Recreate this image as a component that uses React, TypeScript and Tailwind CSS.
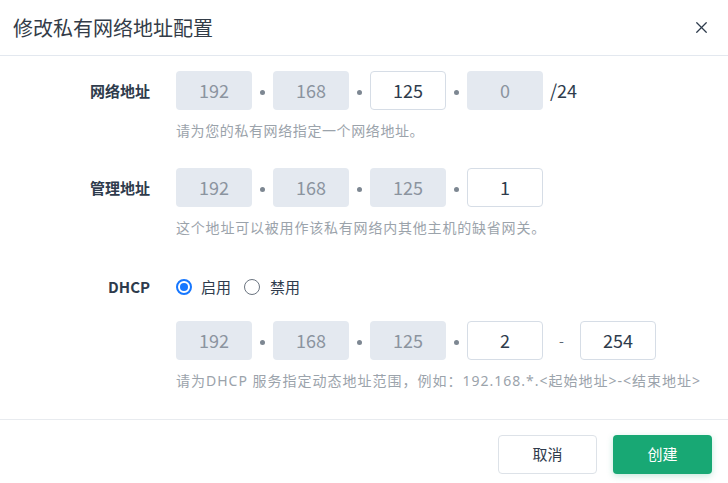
import { X } from "lucide-react";

const font = { fontFamily: '"Noto Sans CJK SC", "Noto Sans", sans-serif' };

function Octet({ value, disabled }: { value: string; disabled?: boolean }) {
  return disabled ? (
    <div className="flex h-[39px] w-[76px] items-center justify-center rounded bg-[#e4e9f0] text-[18px] text-[#8b949f]">
      {value}
    </div>
  ) : (
    <div className="flex h-[39px] w-[76px] items-center justify-center rounded border border-[#d6dde6] bg-white text-[18px] text-[#2e3b4c]">
      {value}
    </div>
  );
}

function Dot() {
  return (
    <div className="flex w-[21px] items-center justify-center pt-[3px]">
      <span className="h-[5px] w-[5px] rounded-full bg-[#7d8792]" />
    </div>
  );
}

function Address({ parts }: { parts: { v: string; d?: boolean }[] }) {
  return (
    <div className="flex items-stretch">
      {parts.map((p, i) => (
        <div key={i} className="flex items-stretch">
          {i > 0 && <Dot />}
          <Octet value={p.v} disabled={p.d} />
        </div>
      ))}
    </div>
  );
}

function Row({ label, children }: { label: string; children: React.ReactNode }) {
  return (
    <div className="flex items-center">
      <div className="w-[150px] text-right text-[15px] font-bold leading-5 text-[#2e3b4c]">{label}</div>
      <div className="ml-[26px] flex items-center">{children}</div>
    </div>
  );
}

function Hint({ children, className = "" }: { children: React.ReactNode; className?: string }) {
  return (
    <p
      className={`ml-[176px] text-[14px] leading-5 text-[#9ba3ab] ${className}`}
      style={{ fontFamily: '"Noto Sans", "Noto Sans CJK SC", sans-serif' }}
    >
      {children}
    </p>
  );
}

export default function App() {
  return (
    <div className="flex h-[483px] w-[728px] flex-col bg-white" style={font}>
      <div className="flex h-14 items-center justify-between border-b border-[#e3e8ef] pl-[13px] pr-[17px]">
        <h1 className="text-[20px] text-[#333c48]">修改私有网络地址配置</h1>
        <X size={19} strokeWidth={1.6} className="text-[#2e3b4c]" />
      </div>

      <div className="pt-[15px]">
        <Row label="网络地址">
          <Address parts={[{ v: "192", d: true }, { v: "168", d: true }, { v: "125" }, { v: "0", d: true }]} />
          <span className="ml-[7px] text-[18px] text-[#2e3b4c]">/24</span>
        </Row>
        <Hint className="mt-[11px] tracking-[0.6px]">请为您的私有网络指定一个网络地址。</Hint>

        <div className="mt-[27px]">
          <Row label="管理地址">
            <Address parts={[{ v: "192", d: true }, { v: "168", d: true }, { v: "125", d: true }, { v: "1" }]} />
          </Row>
        </div>
        <Hint className="mt-[11px] tracking-[0.8px]">这个地址可以被用作该私有网络内其他主机的缺省网关。</Hint>

        <div className="mt-[39px]">
          <Row label="DHCP">
            <div className="flex h-5 items-center text-[15px] leading-5 text-[#2e3b4c]">
              <span className="flex h-[16px] w-[16px] items-center justify-center rounded-full border-2 border-[#1677ff]">
                <span className="h-[8px] w-[8px] rounded-full bg-[#1677ff]" />
              </span>
              <span className="ml-[9px]">启用</span>
              <span className="ml-[13px] h-[16px] w-[16px] rounded-full border border-[#6b7480]" />
              <span className="ml-[10px]">禁用</span>
            </div>
          </Row>
        </div>

        <div className="ml-[176px] mt-[24px] flex items-center">
          <Address parts={[{ v: "192", d: true }, { v: "168", d: true }, { v: "125", d: true }, { v: "2" }]} />
          <span className="w-[37px] text-center text-[14px] text-[#5c6670]">-</span>
          <Octet value="254" />
        </div>
        <Hint className="mt-[11px] tracking-[1px]">
          请为DHCP 服务指定动态地址范围，例如：192.168.*.&lt;起始地址&gt;-&lt;结束地址&gt;
        </Hint>
      </div>

      <div className="mt-auto flex h-[64px] items-start justify-end gap-4 border-t border-[#e8ebef] pr-4 pt-[15px]">
        <button className="h-[39px] w-[99px] rounded border border-[#dde2e8] bg-white text-[15px] text-[#2e3b4c]">
          取消
        </button>
        <button className="h-[39px] w-[99px] rounded bg-[#18a874] text-[15px] text-white shadow-[0_2px_6px_rgba(24,168,116,0.25)]">
          创建
        </button>
      </div>
    </div>
  );
}
